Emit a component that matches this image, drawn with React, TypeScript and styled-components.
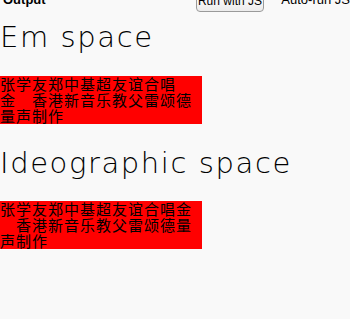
import React from 'react'
import styled, { createGlobalStyle } from 'styled-components'

const GlobalStyle = createGlobalStyle`
  html, body {
    margin: 0;
    padding: 0;
    background: #f9f9f9;
    overflow: hidden;
  }
`

const Page = styled.div`
  display: flex;
  flex-direction: column;
  width: 350px;
  height: 319px;
  overflow: hidden;
  font-family: "DejaVu Sans", sans-serif;
  color: #000;
`

const Toolbar = styled.div`
  display: flex;
  align-items: flex-end;
  height: 22px;
  margin-top: -9px;
  padding-left: 3px;
  font-family: "Liberation Sans", Arial, sans-serif;
  font-size: 13px;
`

const Label = styled.span`
  font-weight: 700;
  line-height: 16px;
  margin-bottom: 5px;
`

const RunButton = styled.button`
  margin-left: 150px;
  margin-bottom: 1px;
  height: 20px;
  width: 81px;
  padding: 0 0 2px 0;
  border: 1px solid #9a9a9a;
  border-radius: 4px;
  background: linear-gradient(#ffffff, #ececec);
  font-family: "Liberation Sans", Arial, sans-serif;
  font-size: 12px;
  line-height: 14px;
  white-space: nowrap;
  color: #000;
`

const AutoRun = styled.span`
  margin-left: 17px;
  margin-bottom: 5px;
  line-height: 16px;
  white-space: nowrap;
`

const Heading = styled.h1`
  margin: ${p => p.$top}px 0 0 0;
  font-size: 29px;
  line-height: 34px;
  font-weight: 200;
  letter-spacing: 1.6px;
  white-space: nowrap;
`

const Sample = styled.div`
  width: 202px;
  margin-top: ${p => p.$top}px;
  background: #ff0000;
  font-family: "Noto Sans CJK SC", sans-serif;
  font-size: 15px;
  letter-spacing: 1px;
  line-height: 16px;
  color: #000;
`

export default function App() {
  return (
    <>
      <GlobalStyle />
      <Page>
        <Toolbar>
          <Label>Output</Label>
          <RunButton>Run with JS</RunButton>
          <AutoRun>Auto-run JS</AutoRun>
        </Toolbar>
        <Heading $top={7}>Em space</Heading>
        <Sample $top={22}>
          张学友郑中基超友谊合唱<br />
          金{'\u2003'}香港新音乐教父雷颂德<br />
          量声制作
        </Sample>
        <Heading $top={22}>Ideographic space</Heading>
        <Sample $top={21}>
          张学友郑中基超友谊合唱金<br />
          {'\u3000'}香港新音乐教父雷颂德量<br />
          声制作
        </Sample>
      </Page>
    </>
  )
}
